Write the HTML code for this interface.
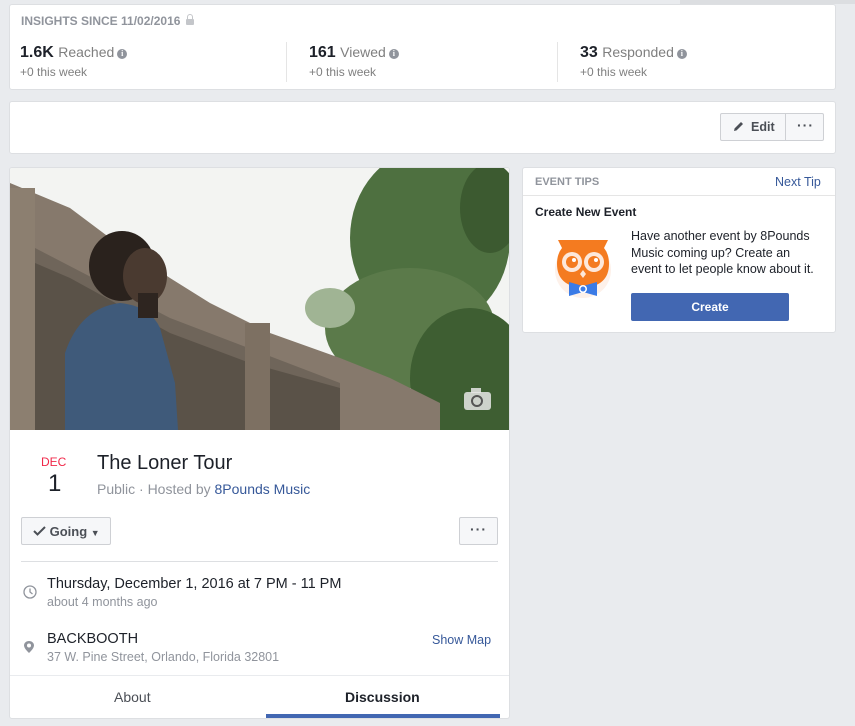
<!DOCTYPE html>
<html><head><meta charset="utf-8"><style>
*{box-sizing:border-box;margin:0;padding:0}
body{width:855px;height:726px;background:#e9ebee;font-family:"Liberation Sans",Helvetica,Arial,sans-serif;position:relative;overflow:hidden;color:#1d2129}
.card{position:absolute;background:#fff;border:1px solid #dddfe2;border-radius:3px}
.a{position:absolute;white-space:nowrap}
.info{display:inline-block;width:10px;height:10px;border-radius:50%;background:#90949c;color:#fff;font-size:8px;font-weight:bold;text-align:center;line-height:10px;vertical-align:1px;margin-left:3px;font-family:"Liberation Serif",serif}
.big{font-size:16px;font-weight:bold;color:#1d2129}
.lbl{font-size:14px;color:#7f7f7f}
.sub{font-size:12px;color:#7f7f7f}
.btn{position:absolute;background:#f6f7f9;border:1px solid #ced0d4;border-radius:2px;font-size:12px;font-weight:bold;color:#4b4f56}
.dots{letter-spacing:1px;font-size:14px;font-weight:bold;color:#4b4f56}
</style></head><body>
<div style="position:absolute;left:680px;top:0;width:175px;height:4px;background:#dcdee1"></div>
<div class="card" style="left:9px;top:4px;width:827px;height:86px">
 <div class="a" style="left:11px;top:9px;font-size:12px;font-weight:bold;color:#90949c">INSIGHTS SINCE 11/02/2016 <span style="display:inline-block;width:8px;height:6px;background:#c4c6ca;margin-left:2px;border-radius:1px;position:relative"><span style="position:absolute;left:1px;top:-5px;width:6px;height:6px;border:1.5px solid #c4c6ca;border-bottom:none;border-radius:3px 3px 0 0"></span></span></div>
 <div class="a" style="left:10px;top:39px"><span class="big">1.6K</span> <span class="lbl">Reached</span><span class="info">i</span></div>
 <div class="a sub" style="left:10px;top:60px">+0 this week</div>
 <div style="position:absolute;left:276px;top:37px;width:1px;height:40px;background:#e5e5e5"></div>
 <div class="a" style="left:299px;top:39px"><span class="big">161</span> <span class="lbl">Viewed</span><span class="info">i</span></div>
 <div class="a sub" style="left:299px;top:60px">+0 this week</div>
 <div style="position:absolute;left:547px;top:37px;width:1px;height:40px;background:#e5e5e5"></div>
 <div class="a" style="left:570px;top:39px"><span class="big">33</span> <span class="lbl">Responded</span><span class="info">i</span></div>
 <div class="a sub" style="left:570px;top:60px">+0 this week</div>
</div>
<div class="card" style="left:9px;top:101px;width:827px;height:53px"></div>
<div class="btn" style="left:720px;top:113px;width:104px;height:28px">
 <div class="a" style="left:12px;top:6px"><svg width="12" height="12" viewBox="0 0 12 12"><path d="M1 11 L1.6 8.4 L8 2 L10 4 L3.6 10.4 Z" fill="#4b4f56"/></svg></div>
 <div class="a" style="left:30px;top:6px;font-size:12.5px">Edit</div>
 <div style="position:absolute;left:64px;top:0;width:1px;height:26px;background:#ced0d4"></div>
 <div class="a dots" style="left:76px;top:3px">···</div>
</div>

<div class="card" style="left:9px;top:167px;width:501px;height:552px;overflow:hidden">
 <svg width="500" height="262" viewBox="0 0 500 262" style="position:absolute;left:0;top:0">
  <rect width="500" height="262" fill="#f3f4f2"/>
  <ellipse cx="420" cy="70" rx="80" ry="90" fill="#4e7040"/>
  <ellipse cx="400" cy="160" rx="85" ry="60" fill="#5b7a4a"/>
  <ellipse cx="460" cy="210" rx="60" ry="70" fill="#3e5e32"/>
  <ellipse cx="320" cy="140" rx="25" ry="20" fill="#a0b494"/>
  <ellipse cx="480" cy="40" rx="30" ry="45" fill="#3c5a30"/>
  <polygon points="0,15 60,40 100,70 160,110 200,135 260,165 330,190 380,210 430,235 430,262 0,262" fill="#86796c"/>
  <polygon points="0,80 25,80 160,150 330,215 330,262 0,262" fill="#6f655a"/>
  <polygon points="25,95 60,110 160,165 240,195 330,220 330,262 25,262" fill="#5a5248"/>
  <rect x="0" y="20" width="25" height="242" fill="#8c7f70"/>
  <rect x="235" y="155" width="25" height="107" fill="#7d7062"/>
  <path d="M55 262 L55 185 Q70 140 110 135 Q140 138 150 160 L165 215 L168 262 Z" fill="#3f5a7a"/>
  <ellipse cx="112" cy="98" rx="33" ry="35" fill="#2a221d"/>
  <ellipse cx="135" cy="108" rx="22" ry="28" fill="#4a3a30"/>
  <rect x="128" y="125" width="20" height="25" fill="#2e2520"/>
  <rect x="454" y="224" width="27" height="18" rx="3" fill="#e6e6e6" opacity="0.85"/>
  <rect x="461" y="220" width="10" height="5" fill="#e6e6e6" opacity="0.85"/>
  <circle cx="467" cy="233" r="5" fill="none" stroke="#555" stroke-width="2"/>
 </svg>
 <div class="a" style="left:31px;top:287px;font-size:12px;color:#f02849">DEC</div>
 <div class="a" style="left:38px;top:302px;font-size:24px;color:#1d2129;font-weight:300">1</div>
 <div class="a" style="left:87px;top:284px;font-size:20px;color:#1d2129">The Loner Tour</div>
 <div class="a" style="left:87px;top:313px;font-size:14px;color:#90949c">Public · Hosted by <span style="color:#365899">8Pounds Music</span></div>
 <div class="btn" style="left:11px;top:349px;width:90px;height:28px"><div class="a" style="left:11px;top:6px;font-size:13px"><svg width="13" height="10" viewBox="0 0 13 10" style="vertical-align:0"><path d="M1 5 L4.5 8.5 L12 1" stroke="#4b4f56" stroke-width="2" fill="none"/></svg> Going <span style="font-size:9px">▼</span></div></div>
 <div class="btn" style="left:449px;top:349px;width:39px;height:28px"><div class="a dots" style="left:10px;top:3px">···</div></div>
 <div style="position:absolute;left:11px;top:393px;width:477px;height:1px;background:#dddfe2"></div>
 <svg width="14" height="14" viewBox="0 0 14 14" style="position:absolute;left:13px;top:417px"><circle cx="7" cy="7" r="6" fill="none" stroke="#90949c" stroke-width="1.3"/><path d="M7 3.5 V7 L9.5 9" stroke="#90949c" stroke-width="1.3" fill="none"/></svg>
 <div class="a" style="left:37px;top:408px;font-size:14.5px;color:#1d2129">Thursday, December 1, 2016 at 7 PM - 11 PM</div>
 <div class="a" style="left:37px;top:427px;font-size:12.5px;color:#90949c">about 4 months ago</div>
 <svg width="12" height="14" viewBox="0 0 12 14" style="position:absolute;left:13px;top:472px"><path d="M6 1 C3 1 1 3 1 5.5 C1 8.5 6 13 6 13 C6 13 11 8.5 11 5.5 C11 3 9 1 6 1 Z" fill="#90949c"/><circle cx="6" cy="5.5" r="2" fill="#fff"/></svg>
 <div class="a" style="left:37px;top:463px;font-size:14.5px;color:#1d2129">BACKBOOTH</div>
 <div class="a" style="left:37px;top:482px;font-size:12.5px;color:#90949c">37 W. Pine Street, Orlando, Florida 32801</div>
 <div class="a" style="left:422px;top:465px;font-size:12.5px;color:#365899">Show Map</div>
 <div style="position:absolute;left:0;top:507px;width:500px;height:1px;background:#e9ebee"></div>
 <div class="a" style="left:104px;top:521px;font-size:14px;color:#4b4f56">About</div>
 <div class="a" style="left:335px;top:521px;font-size:14px;font-weight:bold;color:#1d2129">Discussion</div>
 <div style="position:absolute;left:256px;top:546px;width:234px;height:4px;background:#4267b2"></div>
</div>

<div class="card" style="left:522px;top:167px;width:314px;height:166px">
 <div class="a" style="left:12px;top:8px;font-size:11px;font-weight:bold;color:#90949c">EVENT TIPS</div>
 <div class="a" style="left:252px;top:7px;font-size:12.5px;color:#365899">Next Tip</div>
 <div style="position:absolute;left:0;top:27px;width:312px;height:1px;background:#e5e5e5"></div>
 <div class="a" style="left:12px;top:37px;font-size:12px;font-weight:bold;color:#1d2129">Create New Event</div>
 <svg width="60" height="60" viewBox="0 0 60 60" style="position:absolute;left:32px;top:72px">
  <circle cx="28" cy="30" r="28" fill="#fdf1ea"/>
  <path d="M3 0 L53 0 L49 8 Q54 14 54 24 Q54 46 28 48 Q2 46 2 24 Q2 14 7 8 Z" fill="#f47b20"/>
  <circle cx="17" cy="22" r="10" fill="#fde8da"/><circle cx="39" cy="22" r="10" fill="#fde8da"/>
  <circle cx="17" cy="22" r="6" fill="#f47b20"/><circle cx="39" cy="22" r="6" fill="#f47b20"/>
  <circle cx="19" cy="20" r="2" fill="#fff"/><circle cx="41" cy="20" r="2" fill="#fff"/>
  <path d="M28 30 L25 34 L28 38 L31 34 Z" fill="#fde8da"/>
  <path d="M14 42 L28 46 L42 42 L42 56 L28 52 L14 56 Z" fill="#3b7be6"/>
  <circle cx="28" cy="49" r="4" fill="#fff"/><circle cx="28" cy="49" r="2.5" fill="#3b7be6"/>
 </svg>
 <div style="position:absolute;left:108px;top:60px;font-size:12.5px;line-height:16.5px;color:#1d2129;white-space:nowrap">Have another event by 8Pounds<br>Music coming up? Create an<br>event to let people know about it.</div>
 <div style="position:absolute;left:108px;top:125px;width:158px;height:28px;background:#4267b2;border-radius:2px;color:#fff;font-size:12px;font-weight:bold;text-align:center;line-height:28px">Create</div>
</div>
</body></html>
